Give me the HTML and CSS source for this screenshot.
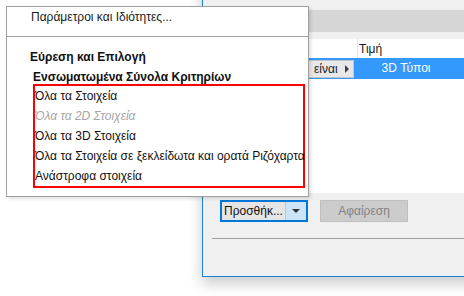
FILE: index.html
```html
<!DOCTYPE html>
<html lang="el">
<head>
<meta charset="utf-8">
<link rel="stylesheet" href="styles.css">
</head>
<body>
<div class="screen">
  <div class="window">
    <div class="win-top"></div>
    <div class="band"></div>
    <div class="gap"></div>
    <div class="table">
      <div class="thead">
        <div class="col-a"></div>
        <div class="col-b head-cell">Τιμή</div>
        <div class="col-c"></div>
      </div>
      <div class="trow selected">
        <div class="col-a op-cell">
          <div class="op-box"><span>είναι</span><span class="op-arrow"></span></div>
        </div>
        <div class="col-b value-cell">3D Τύποι</div>
        <div class="col-c"></div>
      </div>
      <div class="tbody"></div>
    </div>
    <div class="footer">
      <div class="buttons">
        <div class="split-btn">
          <span class="split-main">Προσθήκ...</span>
          <span class="split-drop"><span class="down-arrow"></span></span>
        </div>
        <div class="btn disabled">Αφαίρεση</div>
      </div>
      <div class="rule"></div>
    </div>
  </div>

  <div class="menu">
    <div class="menu-item">Παράμετροι και Ιδιότητες...</div>
    <div class="menu-sep"></div>
    <div class="menu-head">Εύρεση και Επιλογή</div>
    <div class="menu-head sub">Ενσωματωμένα Σύνολα Κριτηρίων</div>
    <div class="highlight">
      <div class="menu-opt">Όλα τα Στοιχεία</div>
      <div class="menu-opt off">Όλα τα 2D Στοιχεία</div>
      <div class="menu-opt">Όλα τα 3D Στοιχεία</div>
      <div class="menu-opt">Όλα τα Στοιχεία σε ξεκλείδωτα και ορατά Ριζόχαρτα</div>
      <div class="menu-opt">Ανάστροφα στοιχεία</div>
    </div>
  </div>
</div>
</body>
</html>
```

FILE: styles.css
```css
* { box-sizing: border-box; }

html, body {
  margin: 0;
  padding: 0;
  background: #ffffff;
}

body {
  font-family: "Liberation Sans", "Noto Sans", sans-serif;
  font-size: 12px;
  color: #111111;
}

.screen {
  position: relative;
  width: 464px;
  height: 296px;
  overflow: hidden;
  background: #ffffff;
}

/* background dialog window */
.window {
  position: absolute;
  left: 202px;
  top: -60px;
  width: 320px;
  height: 337px;
  border: 1px solid #1883d7;
  background: #f0f0f0;
  display: flex;
  flex-direction: column;
  box-shadow: 0 6px 14px rgba(0, 0, 0, 0.22);
}

.win-top { height: 69px; background: #f0f0f0; }
.band { height: 22px; background: #d6d6d6; }
.gap { height: 7px; background: #f0f0f0; }

.table {
  display: flex;
  flex-direction: column;
  height: 154px;
  background: #ffffff;
}

.thead, .trow { display: flex; }
.thead { height: 19px; }
.trow { height: 21px; }
.tbody { flex: 1; }

.col-a { width: 154px; }
.col-b { width: 98px; }
.col-c { flex: 1; }

.head-cell {
  border-left: 1px solid #e5e5e5;
  padding-left: 1px;
  line-height: 21px;
  color: #1a1a1a;
}

.selected { background: #3399ff; }

.op-cell {
  display: flex;
  justify-content: flex-end;
  padding: 2px 3px 1px 0;
}

.op-box {
  width: 48px;
  height: 18px;
  background: #e8e8e8;
  border: 1px solid #c4c4c4;
  display: flex;
  align-items: center;
  justify-content: space-between;
  padding: 0 4px 0 7px;
  color: #222222;
  line-height: 16px;
}

.op-arrow {
  width: 0;
  height: 0;
  border-top: 4px solid transparent;
  border-bottom: 4px solid transparent;
  border-left: 4px solid #404040;
}

.value-cell {
  color: #ffffff;
  text-align: center;
  line-height: 21px;
}

.footer {
  flex: 1;
  background: #f0f0f0;
  padding-top: 7px;
}

.buttons {
  display: flex;
  gap: 12px;
  padding-left: 17px;
}

.split-btn {
  display: flex;
  width: 88px;
  height: 22px;
  border: 2px solid #0078d7;
  background: #e5e5e5;
}

.split-main {
  flex: 1;
  line-height: 18px;
  padding-left: 2px;
  color: #101010;
  border-right: 1px solid #b8c8d8;
}

.split-drop {
  width: 20px;
  background: #cce4f7;
  display: flex;
  align-items: center;
  justify-content: center;
}

.down-arrow {
  width: 0;
  height: 0;
  border-left: 4px solid transparent;
  border-right: 4px solid transparent;
  border-top: 4px solid #333333;
}

.btn {
  width: 88px;
  height: 22px;
  text-align: center;
  line-height: 20px;
}

.btn.disabled {
  background: #cccccc;
  border: 1px solid #bfbfbf;
  color: #838383;
}

.rule {
  height: 1px;
  margin: 16px 0 0 9px;
  background: #a0a0a0;
}

/* context menu */
.menu {
  position: absolute;
  left: 6px;
  top: 6px;
  width: 303px;
  height: 191px;
  background: #ffffff;
  border: 1px solid #a0a0a0;
  box-shadow: 2px 2px 3px rgba(0, 0, 0, 0.12);
  display: flex;
  flex-direction: column;
}

.menu-item {
  line-height: 20px;
  padding-left: 24px;
  color: #1a1a1a;
}

.menu-sep {
  height: 1px;
  margin-top: 9px;
  background: #a0a0a0;
}

.menu-head {
  font-weight: bold;
  line-height: 20px;
  padding-left: 23px;
  color: #111111;
}

.menu-head:nth-of-type(3) { margin-top: 10px; }

.menu-head.sub {
  padding-left: 26px;
  height: 17px;
}

.highlight {
  margin: 0 3px 0 26px;
  border: 2px solid #ff0000;
  display: flex;
  flex-direction: column;
}

.menu-opt {
  line-height: 20px;
  color: #111111;
  white-space: nowrap;
}

.menu-opt.off {
  color: #a6a6a6;
  font-style: italic;
}
```
